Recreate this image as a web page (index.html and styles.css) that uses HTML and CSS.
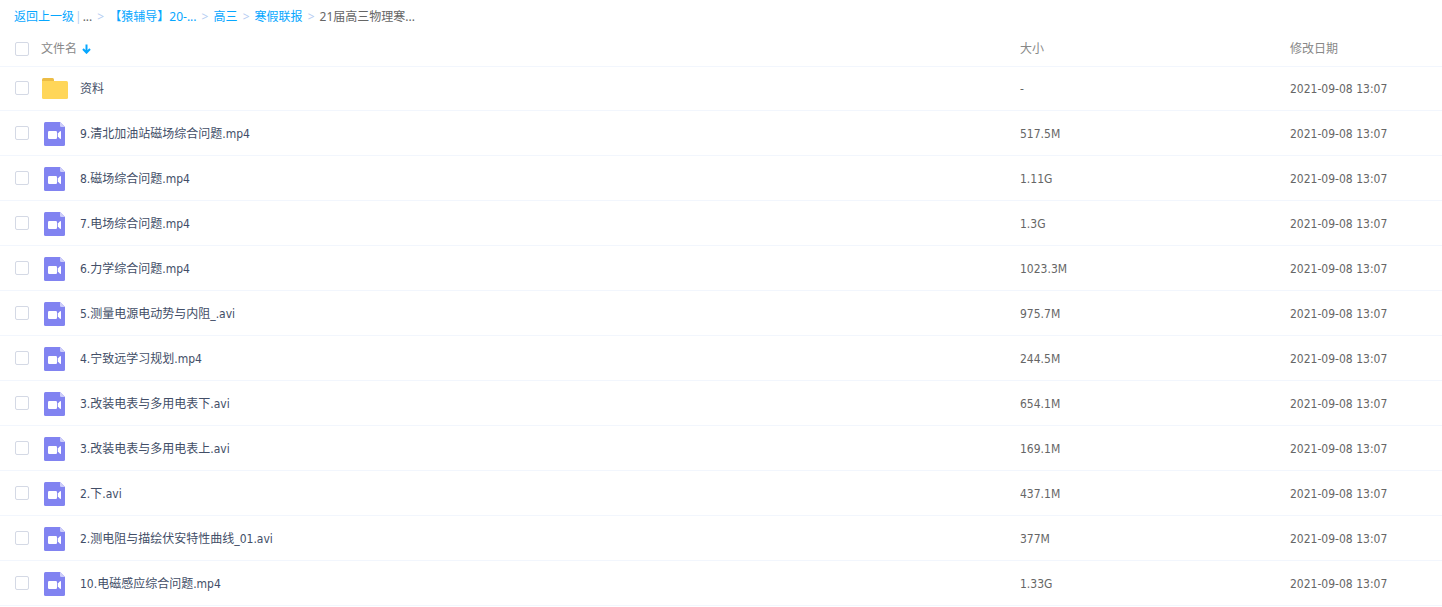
FILE: index.html
```html
<!DOCTYPE html>
<html lang="zh-CN">
<head>
    <meta charset="UTF-8">
    <meta name="viewport" content="width=device-width, initial-scale=1.0">
    <title>21届高三物理寒假联报</title>
    <link rel="stylesheet" href="styles.css">
</head>
<body>
    <svg class="sprite" aria-hidden="true">
        <symbol id="icon-folder" viewBox="0 0 26 21">
            <path d="M0 6V1.500Q0 0 1.500 0H10.500Q12 0 12 1.500V6z" fill="#ecbc45"/>
            <path d="M0 3H24.500Q26 3 26 4.500V19.500Q26 21 24.500 21H1.500Q0 21 0 19.500z" fill="#ffd659"/>
        </symbol>
        <symbol id="icon-video" viewBox="0 0 21 24">
            <path d="M1.500 0H16L21 5V22.500Q21 24 19.500 24H1.500Q0 24 0 22.500V1.500Q0 0 1.500 0z" fill="#8183f1"/>
            <path d="M16 0L21 5H17.200Q16 5 16 3.800z" fill="#cdcdfa"/>
            <rect x="4" y="9" width="9" height="8" rx="1.200" fill="#fff"/>
            <path d="M13.800 11.500L16 9.300Q17 8.600 17 9.800V16.200Q17 17.400 16 16.700L13.800 14.500z" fill="#fff"/>
        </symbol>
    </svg>

    <nav class="breadcrumb" aria-label="路径">
        <a href="#">返回上一级</a>
        <span class="divider">|</span>
        <span>...</span>
        <span class="sep">&gt;</span>
        <a href="#">【猿辅导】20-...</a>
        <span class="sep">&gt;</span>
        <a href="#">高三</a>
        <span class="sep">&gt;</span>
        <a href="#">寒假联报</a>
        <span class="sep">&gt;</span>
        <span>21届高三物理寒...</span>
    </nav>

    <table class="file-list">
        <thead>
            <tr>
                <th class="col-name">
                    <div class="head-name">
                        <input type="checkbox" class="check" aria-label="全选">
                        <span>文件名</span>
                        <svg class="sort" viewBox="0 0 9 10"><path d="M4.500 0.500V8.500M1 5L4.500 8.700L8 5" fill="none" stroke="#06a7ff" stroke-width="2"/></svg>
                    </div>
                </th>
                <th class="col-size">大小</th>
                <th class="col-date">修改日期</th>
            </tr>
        </thead>
        <tbody id="files"></tbody>
    </table>

    <script>
        const files = [
            ['资料', '-', 'folder'],
            ['9.清北加油站磁场综合问题.mp4', '517.5M', 'video'],
            ['8.磁场综合问题.mp4', '1.11G', 'video'],
            ['7.电场综合问题.mp4', '1.3G', 'video'],
            ['6.力学综合问题.mp4', '1023.3M', 'video'],
            ['5.测量电源电动势与内阻_.avi', '975.7M', 'video'],
            ['4.宁致远学习规划.mp4', '244.5M', 'video'],
            ['3.改装电表与多用电表下.avi', '654.1M', 'video'],
            ['3.改装电表与多用电表上.avi', '169.1M', 'video'],
            ['2.下.avi', '437.1M', 'video'],
            ['2.测电阻与描绘伏安特性曲线_01.avi', '377M', 'video'],
            ['10.电磁感应综合问题.mp4', '1.33G', 'video']
        ];

        document.getElementById('files').innerHTML = files.map(([name, size, type], i) => `
            <tr>
                <td>
                    <div class="file">
                        <input type="checkbox" class="check" id="file${i}" aria-label="${name}">
                        <svg class="icon ${type}"><use href="#icon-${type}"/></svg>
                        <a href="#" class="file-name">${name}</a>
                    </div>
                </td>
                <td>${size}</td>
                <td>2021-09-08 13:07</td>
            </tr>`).join('');
    </script>
</body>
</html>
```
FILE: styles.css
```css
body {
    margin: 0;
    background-color: #fff;
    color: #666;
    font-family: "DejaVu Sans Condensed", "Noto Sans CJK SC", sans-serif;
    font-size: 12px;
    line-height: 18px;
}
a {
    color: #06a7ff;
    text-decoration: none;
}
.sprite {
    display: none;
}
.breadcrumb {
    display: flex;
    gap: 4px;
    padding: 8px 14px 4px;
    font-family: "Noto Sans", "Noto Sans CJK SC", sans-serif;
}
.divider,
.sep {
    color: #b4cdf2;
}
.sep {
    width: 9px;
    text-align: center;
}
.divider {
    margin: 0 -3px;
}
.file-list {
    width: 100%;
    table-layout: fixed;
    border-spacing: 0;
}
th,
td {
    height: 42px;
    padding: 2px 0 0;
    border-bottom: 1px solid #f2f6fd;
    text-align: left;
}
th {
    height: 34px;
    color: #888;
    font-weight: normal;
}
tbody tr:first-child td {
    height: 43px;
    padding-top: 0;
}
.col-size {
    width: 270px;
}
.col-date {
    width: 152px;
}
.head-name,
.file {
    display: flex;
    align-items: center;
    padding-left: 15px;
}
.check {
    appearance: none;
    box-sizing: border-box;
    width: 14px;
    height: 14px;
    margin: 0;
    border: 1px solid #d4d9e5;
    border-radius: 2px;
    background-color: #fff;
}
.file .check {
    margin-bottom: 2px;
}
.check:checked {
    border-color: #06a7ff;
    background-color: #06a7ff;
}
.head-name .check {
    margin-right: 12px;
}
.sort {
    width: 9px;
    height: 10px;
    margin-left: 5px;
}
.icon {
    flex: none;
    margin: 0 12px 0 13px;
}
.folder {
    width: 26px;
    height: 21px;
}
.video {
    width: 21px;
    height: 24px;
    margin: 0 15px;
}
.file-name {
    color: #424e67;
}
.file-name:hover {
    color: #06a7ff;
}
```
